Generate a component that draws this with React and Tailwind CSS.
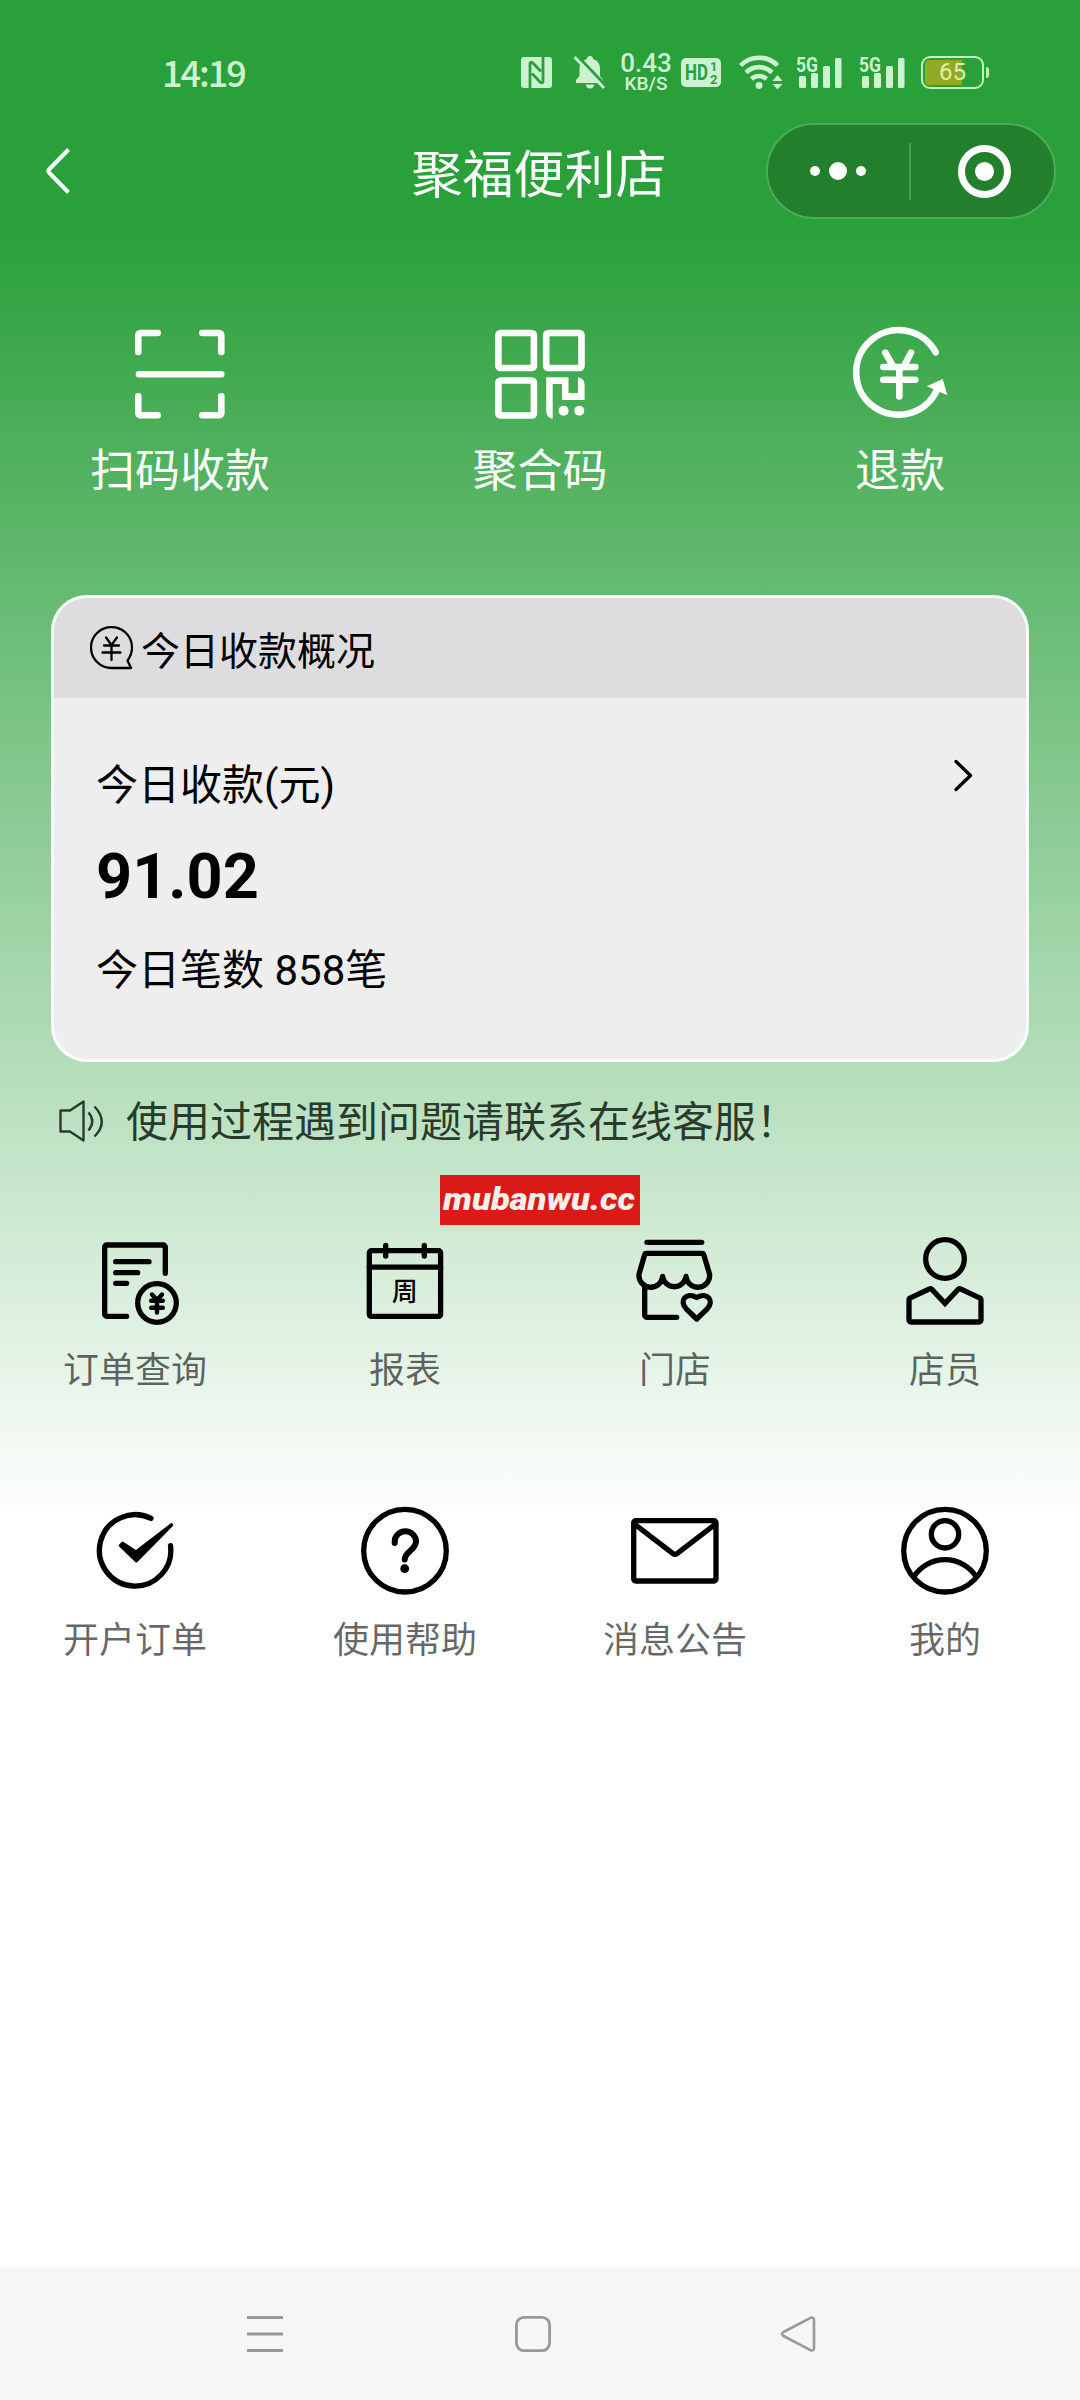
import React from "react";

const Icon = ({children, width = 5.3}) => (
  <svg
    viewBox="0 0 96 96"
    className="h-24 w-24 overflow-visible"
    fill="none"
    stroke="currentColor"
    strokeWidth={width}
    strokeLinecap="round"
    strokeLinejoin="round"
  >
    {children}
  </svg>
);

const actions = [
  {
    label: "扫码收款",
    icon: (
      <Icon width={6.6}>
        <path d="M6.3 26V9a2 2 0 0 1 2-2h17.4M70.3 7h17a2 2 0 0 1 2 2v17M6.3 70.3v17a2 2 0 0 0 2 2h17.4M70.3 89.3h17a2 2 0 0 0 2-2v-17M7 48.3h82.3" />
      </Icon>
    ),
  },
  {
    label: "聚合码",
    icon: (
      <Icon width={6.6}>
        <rect x="6.4" y="7" width="35.5" height="35" rx="2" />
        <rect x="54.2" y="7" width="35.3" height="35" rx="2" />
        <rect x="6.4" y="54.5" width="35.5" height="35" rx="2" />
        <path
          d="M54.2 51.3H76.5V67H86V51.3q6.6 1 6.6 8V74H70V58H60.7V92.7q-6.5-1-6.5-8Z"
          fill="currentColor"
          stroke="none"
        />
        <circle cx="71.6" cy="84.7" r="5" fill="currentColor" stroke="none" />
        <circle cx="87.3" cy="84.7" r="5" fill="currentColor" stroke="none" />
      </Icon>
    ),
  },
  {
    label: "退款",
    icon: (
      <Icon width={6.6}>
        <path d="M83.7 26.3A42.3 42.3 0 1 0 86 61.5" />
        <path d="M90.7 53 74.7 60.3 95.3 69.3Z" fill="currentColor" stroke="none" />
        <path d="M33.3 26.7 41.5 41M59 26.7 51.5 41M31.3 41h32M31.3 53.7h32M47.3 41v29.5" />
      </Icon>
    ),
  },
];

const menus = [
  {
    label: "订单查询",
    icon: (
      <Icon>
        <path d="M78.3 40.3V14a2 2 0 0 0-2-2H19.7a2 2 0 0 0-2 2v67.3a2 2 0 0 0 2 2h20" />
        <path d="M28.7 28.7H62M28.7 39.7h22M28.7 50.3h11" />
        <circle cx="70" cy="70" r="19.3" />
        <path d="m65 61.5 5 5.5 5-5.5M64.2 67.7h11.6M64.2 74.8h11.6M70 67.7v11.8" strokeWidth="4.4" />
      </Icon>
    ),
  },
  {
    label: "报表",
    icon: (
      <Icon>
        <rect x="12.3" y="17.7" width="71.3" height="65.7" rx="2" />
        <path d="M12.3 34.2h71.3M28.7 12.5V23M67.3 12.5V23" />
        <text
          x="47.7"
          y="68"
          textAnchor="middle"
          fill="currentColor"
          stroke="none"
          className="text-[26px] font-medium"
        >
          周
        </text>
      </Icon>
    ),
  },
  {
    label: "门店",
    icon: (
      <Icon>
        <path d="M20 9.3h54.7" />
        <path d="M12 41.3 17.6 21.8a2 2 0 0 1 2-1.5h55.2a2 2 0 0 1 2 1.5L82.6 41.3A11.8 11.8 0 0 1 59 43.5a11.8 11.8 0 0 1-23.4 0A11.8 11.8 0 0 1 12 41.3Z" />
        <path d="M17.7 53v29.3a2 2 0 0 0 2 2h30" />
        <path d="M69.7 86 59.2 75.8c-7.5-8-.2-17.4 10.5-11.3 10.7-6.1 18 3.3 10.5 11.3Z" />
      </Icon>
    ),
  },
  {
    label: "店员",
    icon: (
      <Icon>
        <circle cx="48" cy="26" r="19.3" />
        <path
          d="M12 66.5a1.5 1.5 0 0 1 1-1.4L32.500 56a2 2 0 0 1 2.5.5L48 70.3 61 56.5a2 2 0 0 1 2.5-.5L83 65.1a1.5 1.5 0 0 1 1 1.4V87a2 2 0 0 1-2 2H14a2 2 0 0 1-2-2Z"
          strokeLinejoin="miter"
        />
      </Icon>
    ),
  },
  {
    label: "开户订单",
    icon: (
      <Icon>
        <path d="M64 15.4A35.7 35.7 0 1 0 83.5 42.7" />
        <path
          d="M35.5 39.8 49 48.5 84.5 21.3 85 22 49.3 58.3 33 42.5Z"
          fill="currentColor"
          strokeWidth="2.5"
        />
      </Icon>
    ),
  },
  {
    label: "使用帮助",
    icon: (
      <Icon>
        <circle cx="48" cy="47.7" r="41.3" />
        <path d="M37.7 40v-1.5A10.5 10 0 0 1 59 38.5C59 47 47.7 49 47.7 56.5" strokeWidth="6" />
        <circle cx="47.7" cy="65.7" r="4.4" fill="currentColor" stroke="none" />
      </Icon>
    ),
  },
  {
    label: "消息公告",
    icon: (
      <Icon>
        <rect x="6.7" y="17.7" width="82.3" height="60.3" rx="2" />
        <path d="M8 21.5 46 50.7q2 1.5 4 0L88 21.5" />
      </Icon>
    ),
  },
  {
    label: "我的",
    icon: (
      <Icon>
        <circle cx="48" cy="47.7" r="41.3" />
        <circle cx="48" cy="31.3" r="13.7" />
        <path d="M17 73.5a37 37 0 0 1 62 0" />
      </Icon>
    ),
  },
];

const Signal = () => (
  <svg viewBox="0 0 46 34" className="h-[34px] w-[46px] overflow-visible" fill="currentColor">
    <text x="0" y="16.5" textLength="22" lengthAdjust="spacingAndGlyphs" className="text-[21px] font-bold">
      5G
    </text>
    <rect x="3" y="21" width="7" height="12" rx="1.5" />
    <rect x="15" y="18" width="7" height="15" rx="1.5" />
    <rect x="27" y="11" width="7" height="22" rx="1.5" />
    <rect x="39" y="3" width="6.5" height="30" rx="1.5" />
  </svg>
);

const StatusBar = () => (
  <div className="flex h-[123px] items-start pt-[49px] pl-[162px] text-[#cdf2d1]">
    <div className="flex h-[46px] items-center">
      <span className="w-[358px] pb-[3px] text-[36px] leading-none font-medium tracking-[-2px] font-['Noto_Sans_CJK_SC',sans-serif]">
        14:19
      </span>

      {/* NFC */}
      <svg viewBox="0 0 31 31" className="ml-px h-[31px] w-[31px]">
        <rect width="31" height="31" rx="3" fill="currentColor" />
        <path
          d="M9 31V7q0-3 3-1l8 8.5M22 0v24q0 3-3 1l-8-8.5"
          fill="none"
          stroke="#2aa03b"
          strokeWidth="2.8"
        />
      </svg>

      {/* Muted bell */}
      <svg viewBox="0 0 34 34" className="ml-[21px] h-[34px] w-[34px]">
        <path
          d="M14 4a3 3 0 0 1 6 0c5 1.5 7 5 7 10v7l3 4v3H3v-3l3.5-4v-7c0-5 2.5-8.5 7.5-10ZM13 29.5h8a4 4 0 0 1-8 0Z"
          fill="currentColor"
        />
        <path d="M4 .5 33.5 31.5" stroke="#2aa03b" strokeWidth="3" />
        <path d="M1.5 2 31 33" stroke="currentColor" strokeWidth="2.8" />
      </svg>

      <div className="ml-[12px] flex w-[54px] flex-col items-center font-medium">
        <span className="text-[26px] leading-[22px]">0.43</span>
        <span className="pt-px text-[19px] leading-[18px]">KB/S</span>
      </div>

      {/* HD badge */}
      <div className="ml-[8px] flex h-[29px] w-[40px] items-center justify-center rounded-[5px] bg-[#cdf2d1] font-bold text-[#2aa03b]">
        <svg viewBox="0 0 40 29" className="h-full w-full" fill="currentColor">
          <text x="4" y="22" textLength="23" lengthAdjust="spacingAndGlyphs" className="text-[22px]">
            HD
          </text>
          <text x="29" y="13" className="text-[13px]">
            1
          </text>
          <text x="29" y="26" className="text-[13px]">
            2
          </text>
        </svg>
      </div>

      {/* Wifi */}
      <svg viewBox="0 0 46 36" className="ml-[17px] h-[36px] w-[46px]" fill="none" stroke="currentColor" strokeWidth="4.6">
        <path d="M2.5 11.5a26 26 0 0 1 37 0M8 18.5a18.5 18.5 0 0 1 26 0M13.5 25a11 11 0 0 1 15 0" />
        <circle cx="21" cy="31.5" r="3.4" fill="currentColor" stroke="none" />
        <path d="m39.5 21 5 6h-10ZM39.5 35.5l5-5.5h-10Z" fill="currentColor" stroke="none" />
      </svg>

      <div className="ml-[12px] flex gap-[17px]">
        <Signal />
        <Signal />
      </div>

      {/* Battery */}
      <div className="ml-[16px] flex items-center gap-[2px]">
        <div className="relative h-[33px] w-[63px] rounded-[9px] border-[2.5px] border-[#bdf5b8] p-[2px]">
          <div className="h-full w-[37px] rounded-l-[4px] bg-[#93ab24]" />
          <span className="absolute inset-0 flex items-center justify-center text-[24px] leading-none text-[#e2efa8]">
            65
          </span>
        </div>
        <div className="h-[11px] w-[3px] rounded-r bg-[#bdf5b8]" />
      </div>
    </div>
  </div>
);

const TitleBar = () => (
  <div className="grid h-24 grid-cols-[290px_1fr_290px] items-center pr-[24px] pl-[24px]">
    <svg viewBox="0 0 26 48" className="ml-[21px] h-[48px] w-[26px]" fill="none" stroke="white" strokeWidth="4">
      <path d="M23.5 2.5 4 22.5q-1.5 1.5 0 3L23.5 45.5" />
    </svg>
    <h1 className="pt-[8px] pr-[2px] text-center text-[51px] leading-none text-white">聚福便利店</h1>
    <div className="flex h-24 items-center rounded-full border-2 border-[#4cac58] bg-[#22802c]">
      <div className="flex flex-1 items-center justify-center gap-[9px] pr-[2px]">
        <span className="h-[10px] w-[10px] rounded-full bg-white" />
        <span className="h-[18px] w-[18px] rounded-full bg-white" />
        <span className="h-[10px] w-[10px] rounded-full bg-white" />
      </div>
      <div className="h-[57px] w-[2px] bg-[#4f9b58]" />
      <div className="flex flex-1 items-center justify-center pl-[4px]">
        <div className="flex h-[53px] w-[53px] items-center justify-center rounded-full border-[7px] border-white">
          <div className="h-[19px] w-[19px] rounded-full bg-white" />
        </div>
      </div>
    </div>
  </div>
);

const Summary = () => (
  <div className="mx-[51px] mt-[98px] h-[467px] overflow-hidden rounded-[36px] border-[3px] border-[#fafffb] bg-[#eeeeee] text-black">
    <div className="flex h-[100px] items-center bg-[#dddddf] pl-[36px]">
      <svg
        viewBox="0 0 44 44"
        className="h-[44px] w-[44px]"
        fill="none"
        stroke="currentColor"
        strokeWidth="2.3"
        strokeLinecap="round"
        strokeLinejoin="round"
      >
        <path d="M41 42H21.5A20.5 20.5 0 1 1 42 21.5q0 7-4.5 13Z" />
        <path d="m16 11.500 5.5 7.5 5.5-7.5M14 19.5h15M12.5 26.5h18M21.5 19v15" />
      </svg>
      <h2 className="ml-[7px] pt-[9px] text-[39px] leading-none">今日收款概况</h2>
    </div>
    <div className="flex justify-between pt-[60px] pr-[52px] pl-[42px]">
      <div className="pt-[3px]">
        <p className="text-[42px] leading-[50px]">今日收款(元)</p>
        <p className="mt-[34px] text-[63px] leading-[64px] font-bold">91.02</p>
        <p className="mt-[37px] text-[42px] leading-[50px]">今日笔数 858笔</p>
      </div>
      <svg
        viewBox="0 0 22 36"
        className="h-[36px] w-[22px]"
        fill="none"
        stroke="currentColor"
        strokeWidth="3.3"
        strokeLinecap="round"
        strokeLinejoin="round"
      >
        <path d="M4 3.5 18.5 17.500 4 31.5" />
      </svg>
    </div>
  </div>
);

const Notice = () => (
  <div className="mt-[29px] flex h-[60px] items-center pl-[59px] text-[#2a3b2d]">
    <svg
      viewBox="0 0 46 42"
      className="h-[42px] w-[46px]"
      fill="none"
      stroke="currentColor"
      strokeWidth="2.4"
      strokeLinejoin="round"
    >
      <path d="M1.5 10.5H11L24.5 1.5V40.5L11 31.5H1.5Z" />
      <path d="M29.5 12.5q7.5 8.5 0 18M35.5 6.5q14.5 15.5 0 30" />
    </svg>
    <p className="ml-[21px] pt-[3px] text-[42px] leading-none">使用过程遇到问题请联系在线客服！</p>
  </div>
);

const NavBar = () => (
  <div className="mt-auto flex h-[133px] items-center bg-[#f6f6f6] pl-[245px]">
    <svg viewBox="0 0 40 40" className="h-10 w-10" stroke="#999999" strokeWidth="3">
      <path d="M2 3.5h36M2 20h36M2 36.5h36" />
    </svg>
    <svg viewBox="0 0 40 40" className="ml-[228px] h-10 w-10" fill="none" stroke="#999999" strokeWidth="2.8">
      <rect x="3.4" y="3.4" width="33.2" height="33.2" rx="7.5" />
    </svg>
    <svg
      viewBox="0 0 40 40"
      className="ml-[226px] h-10 w-10"
      fill="none"
      stroke="#999999"
      strokeWidth="2.6"
      strokeLinejoin="round"
    >
      <path d="M31.5 3.8 4.5 18q-3 2 0 4L31.5 36.2q3.5 1 3.5-2V5.800q0-3-3.5-2Z" />
    </svg>
  </div>
);

const App = () => {
  return (
    <div className="flex h-[2400px] w-[1080px] flex-col bg-white bg-[linear-gradient(to_bottom,#2aa03b_230px,#ffffff_1520px)] font-[Roboto,'Noto_Sans_CJK_SC',sans-serif]">
      <StatusBar />
      <TitleBar />

      {/* Quick actions */}
      <div className="grid grid-cols-3 pt-[107px] text-white">
        {actions.map((item) => (
          <div key={item.label} className="flex flex-col items-center">
            {item.icon}
            <span className="mt-[25px] text-[45px] leading-[50px]">{item.label}</span>
          </div>
        ))}
      </div>

      <Summary />
      <Notice />

      <div className="mx-auto mt-[24px] h-[50px] w-[200px] bg-[#d91a17] text-[#f6efec]">
        <svg viewBox="0 0 200 50" className="h-full w-full" fill="currentColor">
          <text
            x="3"
            y="35"
            textLength="192"
            lengthAdjust="spacingAndGlyphs"
            className="text-[32px] font-black italic"
          >
            mubanwu.cc
          </text>
        </svg>
      </div>

      {/* Menu */}
      <div className="mt-[8px] grid grid-cols-4 gap-y-[112px] text-black">
        {menus.map((item) => (
          <div key={item.label} className="flex flex-col items-center">
            {item.icon}
            <span className="mt-[22px] text-[36px] leading-[40px] text-black/60">{item.label}</span>
          </div>
        ))}
      </div>

      <NavBar />
    </div>
  );
};

export default App;
